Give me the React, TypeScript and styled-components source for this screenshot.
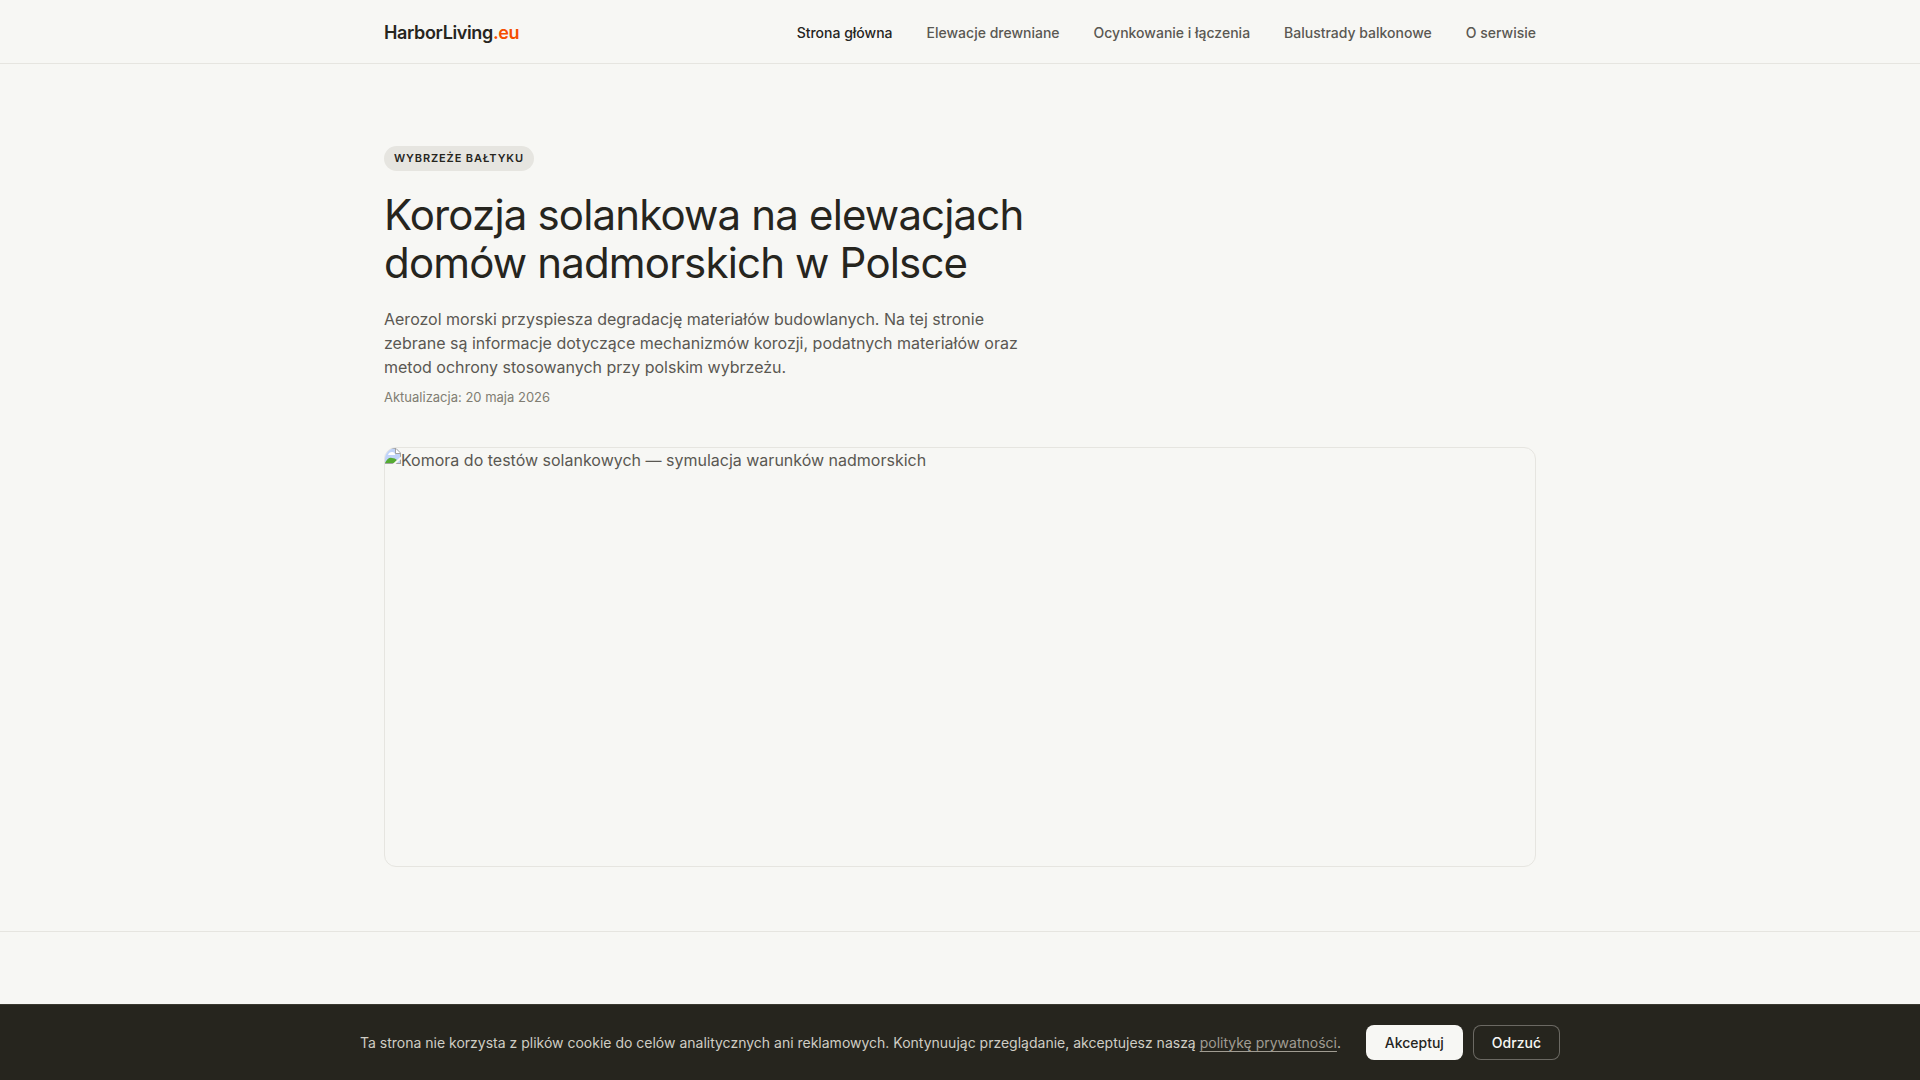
import React from "react";
import styled, { createGlobalStyle, css } from "styled-components";

const color = {
  canvas: "#f7f7f4",
  ink: "#26251e",
  body: "#5a5852",
  muted: "#807d72",
  line: "#e6e5e0",
  accent: "#f54e00",
  soft: "#cfcdc4",
  link: "#a09c92",
  edge: "#6b6963",
};

const GlobalStyle = createGlobalStyle`
  *, *::before, *::after { box-sizing: border-box; }
  html { min-height: 100%; background: ${color.canvas}; }
  body {
    margin: 0;
    background: ${color.canvas};
    color: ${color.body};
    font-family: Inter, "Liberation Sans", sans-serif;
    font-size: 16px;
    line-height: 24px;
  }
`;

const Container = styled.div`
  width: 100%;
  max-width: 1200px;
  margin: 0 auto;
  padding: 0 24px;
`;

const Header = styled.header`
  border-bottom: 1px solid ${color.line};
`;

const HeaderRow = styled(Container)`
  display: flex;
  flex-wrap: wrap;
  align-items: center;
  justify-content: space-between;
  gap: 0 32px;
  min-height: 63px;
  padding-top: 2px;
`;

const Logo = styled.a`
  color: ${color.ink};
  font-size: 18px;
  font-weight: 600;
  letter-spacing: -0.02em;
  text-decoration: none;

  span {
    color: ${color.accent};
  }
`;

const NavList = styled.ul`
  display: flex;
  flex-wrap: wrap;
  gap: 0 34px;
  margin: 0;
  padding: 0;
  list-style: none;
`;

const NavLink = styled.a<{ $active?: boolean }>`
  color: ${(p) => (p.$active ? color.ink : color.body)};
  font-size: 14px;
  font-weight: 500;
  text-decoration: none;
`;

const Hero = styled.section`
  padding: 82px 0 64px;
  border-bottom: 1px solid ${color.line};
`;

const HeroText = styled.div`
  display: flex;
  flex-direction: column;
  align-items: flex-start;
  max-width: 660px;
`;

const Badge = styled.span`
  padding: 4px 10px;
  border-radius: 999px;
  background: ${color.line};
  color: ${color.ink};
  font-size: 11px;
  font-weight: 600;
  line-height: 17px;
  letter-spacing: 0.08em;
  text-transform: uppercase;
`;

const Title = styled.h1`
  margin: 20px 0;
  color: ${color.ink};
  font-size: 42px;
  font-weight: 400;
  line-height: 48px;
  letter-spacing: -0.02em;
`;

const Lead = styled.p`
  margin: 0;
`;

const Updated = styled.p`
  margin: 8px 0 0;
  color: ${color.muted};
  font-size: 13px;
  line-height: 20px;
`;

const Figure = styled.div`
  display: flex;
  align-items: flex-start;
  height: 420px;
  margin-top: 40px;
  border: 1px solid ${color.line};
  border-radius: 12px;
  overflow: hidden;
`;

const Missing = styled.svg`
  flex: none;
  width: 16px;
  height: 16px;
`;

const Banner = styled.aside`
  position: fixed;
  inset: auto 0 0;
  padding: 20px 24px;
  border-top: 1px solid #3a3930;
  background: ${color.ink};
`;

const BannerRow = styled.div`
  display: flex;
  align-items: center;
  justify-content: space-between;
  gap: 20px;
  max-width: 1200px;
  margin: 0 auto;
`;

const BannerText = styled.p`
  flex: 1;
  margin: 0;
  color: ${color.soft};
  font-size: 14px;
  line-height: 20px;

  a {
    color: ${color.link};
    text-decoration: underline;
    text-underline-offset: 3px;
  }
`;

const BannerActions = styled.div`
  display: flex;
  flex: none;
  gap: 10px;
`;

const Button = styled.button<{ $primary?: boolean }>`
  padding: 8px 19px;
  border: 0;
  border-radius: 8px;
  font: 500 14px/19px Inter, "Liberation Sans", sans-serif;
  cursor: pointer;

  ${(p) =>
    p.$primary
      ? css`
          background: ${color.canvas};
          color: ${color.ink};
        `
      : css`
          background: transparent;
          color: ${color.canvas};
          box-shadow: inset 0 0 0 1px ${color.edge};
        `}
`;

const links = [
  "Strona główna",
  "Elewacje drewniane",
  "Ocynkowanie i łączenia",
  "Balustrady balkonowe",
  "O serwisie",
];

function MissingIcon() {
  return (
    <Missing viewBox="0 0 16 16" aria-hidden="true">
      <path d="M0 0h11l5 5v11H0z" fill="#c0d3f8" />
      <path d="M3 7q1-3 4-3 3 0 3 3z" fill="#fff" />
      <path d="M0 15q3-6 7-5 3 0 5 2l-3 4H0z" fill="#55ab33" />
      <path d="M11 0v5h5z" fill="#fff" />
      <path d="M10.500 0v5.500H16M0 .5h11l4.500 4.500v11M0 15.500h16" fill="none" stroke="#a3a3a3" />
      <path d="M8 17 17 9" stroke="#f7f7f4" strokeWidth="2" />
    </Missing>
  );
}

export default function App() {
  return (
    <>
      <GlobalStyle />
      <Header>
        <HeaderRow>
          <Logo href="#">
            HarborLiving<span>.eu</span>
          </Logo>
          <nav aria-label="Menu">
            <NavList>
              {links.map((label, i) => (
                <li key={label}>
                  <NavLink href="#" $active={i === 0}>
                    {label}
                  </NavLink>
                </li>
              ))}
            </NavList>
          </nav>
        </HeaderRow>
      </Header>
      <main>
        <Hero>
          <Container>
            <HeroText>
              <Badge>Wybrzeże Bałtyku</Badge>
              <Title>Korozja solankowa na elewacjach domów nadmorskich w Polsce</Title>
              <Lead>
                Aerozol morski przyspiesza degradację materiałów budowlanych. Na tej stronie zebrane
                są informacje dotyczące mechanizmów korozji, podatnych materiałów oraz metod ochrony
                stosowanych przy polskim wybrzeżu.
              </Lead>
              <Updated>Aktualizacja: 20 maja 2026</Updated>
            </HeroText>
            <Figure>
              <MissingIcon />
              <span>Komora do testów solankowych — symulacja warunków nadmorskich</span>
            </Figure>
          </Container>
        </Hero>
      </main>
      <Banner>
        <BannerRow>
          <BannerText>
            Ta strona nie korzysta z plików cookie do celów analitycznych ani reklamowych.
            Kontynuując przeglądanie, akceptujesz naszą <a href="#">politykę prywatności</a>.
          </BannerText>
          <BannerActions>
            <Button type="button" $primary>
              Akceptuj
            </Button>
            <Button type="button">Odrzuć</Button>
          </BannerActions>
        </BannerRow>
      </Banner>
    </>
  );
}
